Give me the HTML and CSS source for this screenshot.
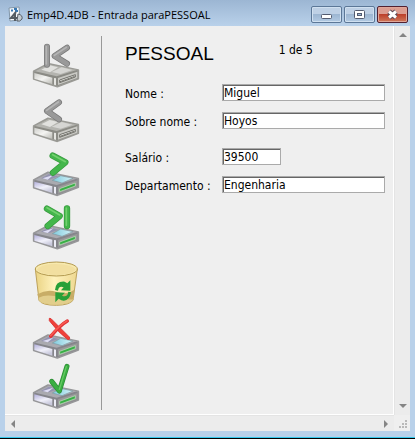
FILE: index.html
```html
<!DOCTYPE html>
<html lang="pt">
<head>
<meta charset="utf-8">
<title>Emp4D.4DB - Entrada paraPESSOAL</title>
<link rel="stylesheet" href="styles.css">
</head>
<body>
<svg class="defs" aria-hidden="true">
  <defs>
    <linearGradient id="silver" x1="0" y1="0" x2="1" y2="1"><stop offset="0" stop-color="#cfcfcb"/><stop offset=".5" stop-color="#f4f4f2"/><stop offset="1" stop-color="#b9b9b3"/></linearGradient>
    <linearGradient id="lilac" x1="0" y1="0" x2=".5" y2="1"><stop offset="0" stop-color="#b3b0dc"/><stop offset=".6" stop-color="#f1f1fa"/><stop offset="1" stop-color="#c9c9dc"/></linearGradient>
    <linearGradient id="glass" x1="0" y1="0" x2="1" y2="0"><stop offset="0" stop-color="#7fc9dc"/><stop offset="1" stop-color="#d5f4fa"/></linearGradient>
    <linearGradient id="gold" x1="0" y1="0" x2="1" y2="0"><stop offset="0" stop-color="#ead383"/><stop offset=".45" stop-color="#fff2bd"/><stop offset="1" stop-color="#eed890"/></linearGradient>
    <g id="drive-gray" stroke-linejoin="round">
      <path d="M5-48 48-71 139-52V-26L76-2 5-25Z" fill="#8b8b85" stroke="#9a9a95" stroke-width="5"/>
      <path d="M9-48 49-69 134-52 74-33Z" fill="#b4b4af"/>
      <path d="M28-53 53-66 78-60 54-45Z" fill="#e1e1de"/>
      <path d="M59-46 89-60 121-52 86-40Z" fill="#d6d6d3"/>
      <path d="M7-43 61-29V-9L7-26Z" fill="url(#silver)"/>
      <path d="M66-28 72-27V-6L66-8Z" fill="#e5e5e1"/>
      <path d="M78-28 136-47V-28L78-7Z" fill="#c9c9c4"/>
      <path d="M83-22 130-38V-31L83-14Z" fill="#eeeeea" stroke="#70706a" stroke-width="3"/>
      <path d="M84-17 128-33" stroke="#777770" stroke-width="3"/>
    </g>
    <g id="drive-color" stroke-linejoin="round">
      <path d="M5-48 48-71 139-52V-26L76-2 5-25Z" fill="#85858b" stroke="#979799" stroke-width="5"/>
      <path d="M9-48 49-69 134-52 74-33Z" fill="#aaaab0"/>
      <path d="M27-53 51-66 80-59 51-49Z" fill="#9493b0"/>
      <path d="M32-53 64-63 47-49Z" fill="#deddf4"/>
      <path d="M61-47 86-61 123-53 90-39Z" fill="url(#glass)" stroke="#81979f" stroke-width="2"/>
      <path d="M7-43 61-29V-9L7-26Z" fill="url(#lilac)"/>
      <path d="M66-28 72-27V-6L66-8Z" fill="#ececf5"/>
      <path d="M78-28 136-47V-28L78-7Z" fill="#999"/>
      <path d="M83-22 130-39V-30L83-13Z" fill="#39ae46" stroke="#c8e5c5" stroke-width="2"/>
    </g>
  </defs>
</svg>
<main class="window">
  <header class="titlebar">
    <svg class="app-icon" viewBox="0 0 16 18" aria-hidden="true">
      <path d="M1 2 11 1 12 14 2 15Z" fill="#f5f8fb" stroke="#8297aa"/>
      <path d="M3 4.500h2M6 3h3M7 5h3" stroke="#3978b2" stroke-width="2"/>
      <path d="M8 6 3 12H9M7 8V15" fill="none" stroke="#545c63" stroke-width="2"/>
      <path d="M10 8Q15 9 14 13 12 16 9 15Z" fill="#c4ccd2" stroke="#586069" stroke-width="1"/>
    </svg>
    <h1 class="caption">Emp4D.4DB - Entrada paraPESSOAL</h1>
    <div class="controls">
      <button class="control" aria-label="Minimizar"><svg viewBox="0 0 29 15"><rect x="9.500" y="7.500" width="10" height="4" rx="1" fill="#fff" stroke="#535b70"/></svg></button>
      <button class="control" aria-label="Maximizar"><svg viewBox="0 0 29 15"><rect x="9.500" y="3.500" width="10" height="8" rx="1" fill="#fff" stroke="#535b70"/><rect x="12.500" y="6.500" width="4" height="2" fill="#9eb9d7" stroke="#535b70"/></svg></button>
      <button class="control close" aria-label="Fechar"><svg viewBox="0 0 29 15"><path d="M11 4.500 18 10.500M18 4.500 11 10.500" stroke="#594854" stroke-width="5"/><path d="M11 4.500 18 10.500M18 4.500 11 10.500" stroke="#fff" stroke-width="3"/></svg></button>
    </div>
  </header>
  <div class="client">
    <div class="view">
      <nav class="tools" aria-label="Registros">
        <button class="tool" aria-label="Primeiro registro"><svg viewBox="0 0 144 162"><use href="#drive-gray" y="154"/><g fill="none" stroke-linecap="round" stroke-linejoin="round"><path d="M45 32V86M105 35 68 60 105 83" stroke="#777" stroke-width="18"/><path d="M45 32V86M105 35 68 60 105 83" stroke="#999" stroke-width="14"/><path d="M43 32V84M103 34 67 58" stroke="#b5b5b5" stroke-width="5"/></g></svg></button>
        <button class="tool" aria-label="Registro anterior"><svg viewBox="0 0 144 162"><use href="#drive-gray" y="156"/><g fill="none" stroke-linecap="round" stroke-linejoin="round"><path d="M81 37 45 63 81 88" stroke="#777" stroke-width="18"/><path d="M81 37 45 63 81 88" stroke="#999" stroke-width="14"/><path d="M79 36 44 61" stroke="#b5b5b5" stroke-width="5"/></g></svg></button>
        <button class="tool" aria-label="Próximo registro"><svg viewBox="0 0 144 162"><use href="#drive-color" y="156"/><g fill="none" stroke-linecap="round" stroke-linejoin="round"><path d="M62 35 100 55 63 86" stroke="#37983d" stroke-width="19"/><path d="M62 35 100 55 63 86" stroke="#43b64b" stroke-width="15"/><path d="M62 32 100 53" stroke="#72d06e" stroke-width="5"/></g></svg></button>
        <button class="tool" aria-label="Último registro"><svg viewBox="0 0 144 162"><use href="#drive-color" y="154"/><g fill="none" stroke-linecap="round" stroke-linejoin="round"><path d="M45 32 83 54 47 84M105 31V84" stroke="#37983d" stroke-width="19"/><path d="M45 32 83 54 47 84M105 31V84" stroke="#43b64b" stroke-width="15"/><path d="M45 29 83 51M103 30V82" stroke="#72d06e" stroke-width="5"/></g></svg></button>
        <button class="tool" aria-label="Excluir registro"><svg viewBox="0 0 144 162"><path d="M10 51 21 145Q29 160 74 160 113 159 123 145L136 51Z" fill="url(#gold)" stroke="#bda25b" stroke-width="3"/><path d="M16 127Q45 110 74 120T127 113L123 144Q113 158 74 158 29 158 21 144Z" fill="#c8ad66"/><path d="M20 137Q45 124 87 137T124 134L122 145Q111 158 73 158 29 158 21 145Z" fill="#e2ce8c"/><ellipse cx="73" cy="51" rx="63" ry="21" fill="#f7e9ae" stroke="#b49a50" stroke-width="3"/><path d="M14 53Q32 69 73 69T132 53Q119 37 73 36T14 53Z" fill="#f2dfa0"/><path d="M69 114Q71 87 98 89L106 94 115 85V116L87 115 95 106Q80 100 78 116Z" fill="#27a038"/><path d="M117 121Q112 151 88 145L80 140 70 151V121L99 122 90 131Q106 138 109 119Z" fill="#27a038"/></svg></button>
        <button class="tool" aria-label="Cancelar"><svg viewBox="0 0 144 162"><use href="#drive-color" y="158"/><path d="M52 37Q57 36 61 42L112 93Q116 101 108 101 78 79 52 44Z" fill="#ef4039" stroke="#dd3a3a" stroke-width="3"/><path d="M106 45Q86 56 56 91" fill="none" stroke="#df3035" stroke-width="10" stroke-linecap="round"/><path d="M105 45Q84 56 56 89" fill="none" stroke="#f85a50" stroke-width="5" stroke-linecap="round"/></svg></button>
        <button class="tool" aria-label="Confirmar"><svg viewBox="0 0 144 162"><use href="#drive-color" y="146"/><g fill="none" stroke-linecap="round" stroke-linejoin="round"><path d="M59 64 82 93 105 19" stroke="#2b8b33" stroke-width="15"/><path d="M59 64 82 93 105 19" stroke="#3aae42" stroke-width="11"/><path d="M82 88 103 20" stroke="#65ca63" stroke-width="4"/></g></svg></button>
      </nav>
      <form class="record">
        <div class="heading"><h2 class="title">PESSOAL</h2><output class="position">1 de 5</output></div>
        <div class="group">
          <label for="nome">Nome :</label><input id="nome" value="Miguel">
          <label for="sobrenome">Sobre nome :</label><input id="sobrenome" value="Hoyos">
        </div>
        <div class="group">
          <label for="salario">Salário :</label><input id="salario" class="short" value="39500">
          <label for="departamento">Departamento :</label><input id="departamento" value="Engenharia">
        </div>
      </form>
    </div>
    <div class="scroll vertical">
      <button class="arrow" aria-label="Rolar para cima"><svg viewBox="0 0 8 4"><path d="M0 4 4 0 8 4Z" fill="#858585"/></svg></button>
      <button class="arrow" aria-label="Rolar para baixo"><svg viewBox="0 0 8 4"><path d="M0 0H8L4 4Z" fill="#858585"/></svg></button>
    </div>
    <div class="scroll horizontal">
      <button class="arrow" aria-label="Rolar para a esquerda"><svg class="side" viewBox="0 0 4 8"><path d="M4 0V8L0 4Z" fill="#858585"/></svg></button>
      <button class="arrow" aria-label="Rolar para a direita"><svg class="side" viewBox="0 0 4 8"><path d="M0 0V8L4 4Z" fill="#858585"/></svg></button>
    </div>
    <div class="grip"><svg viewBox="0 0 16 16" aria-hidden="true"><path d="M11 5h2v2h-2zM8 8h2v2H8zM11 8h2v2h-2zM5 11h2v2H5zM8 11h2v2H8zM11 11h2v2h-2z" fill="#b9b9b9"/></svg></div>
  </div>
</main>
</body>
</html>
```
FILE: styles.css
```css
* { box-sizing: border-box; }
body {
  margin: 0;
  font: 12px/16px "DejaVu Sans Condensed", "DejaVu Sans", sans-serif;
  font-stretch: condensed;
  color: #000;
}
button { padding: 0; border: 0; background: none; }
svg { display: block; }
.defs { position: absolute; width: 0; height: 0; }
.window {
  display: flex;
  flex-direction: column;
  min-height: 100vh;
  padding: 0 5px 7px;
  border-bottom: 1px solid #000;
  background: linear-gradient(#9cb6d3, #b9d1ea 26px);
  box-shadow: inset 0 -1px #35c9ed;
}
.titlebar { display: flex; align-items: center; height: 26px; padding: 3px 2px 0 3px; }
.app-icon { width: 16px; height: 18px; margin-right: 3px; }
.caption { flex: 1; margin: 0; font: 11px/16px "Open Sans", sans-serif; white-space: nowrap; }
.controls { display: flex; gap: 2px; }
.control {
  width: 31px;
  height: 17px;
  border: 1px solid #5c7797;
  border-radius: 2px;
  background: linear-gradient(#bed0e5 45%, #9db6d2 50%, #b2cae3);
  box-shadow: inset 0 0 0 1px #d0e0f0;
}
.close { border-color: #522030; background: linear-gradient(#dc9d91 45%, #bd412c 50%, #cf795b); box-shadow: inset 0 0 0 1px #e0a698; }
.client { flex: 1; display: grid; grid-template: 1fr 16px / 1fr 16px; background: #efefef; }
.view { display: flex; padding: 10px 8px 0 28px; border-right: 1px solid #fff; border-bottom: 1px solid #fff; }
.tools { display: flex; flex-direction: column; width: 69px; margin-bottom: 4px; border-right: 1px solid #999; }
.tool, .tool svg { width: 48px; height: 54px; }
.tool:last-child { margin-bottom: -5px; }
.tool svg { margin-left: -1px; }
.record { flex: 1; padding-left: 23px; }
.heading { display: flex; gap: 65px; padding-top: 5px; margin-bottom: 15px; }
.title { margin: 0; font: 19px/26px "Liberation Sans", sans-serif; }
.position { line-height: 18px; }
.group { display: grid; grid-template-columns: 97px 1fr; row-gap: 8px; align-items: center; margin-bottom: 16px; }
label { padding-top: 4px; line-height: 16px; white-space: nowrap; }
input {
  width: 100%;
  height: 17px;
  padding: 2px 1px 0;
  border: 1px solid #aaa;
  border-radius: 0;
  outline: 0;
  background: #fff;
  box-shadow: inset 1px 1px #666;
  color: #000;
  font: inherit;
}
.short { width: 59px; }
.scroll { display: flex; justify-content: space-between; background: #ececec; }
.vertical { flex-direction: column; border-left: 1px solid #e4e4e4; }
.horizontal { border-top: 1px solid #e4e4e4; }
.arrow { display: grid; place-items: center; width: 16px; height: 18px; }
.horizontal .arrow { height: 15px; }
.arrow svg { width: 8px; height: 4px; }
.arrow .side { width: 4px; height: 8px; }
.grip { background: #efefef; }
```
